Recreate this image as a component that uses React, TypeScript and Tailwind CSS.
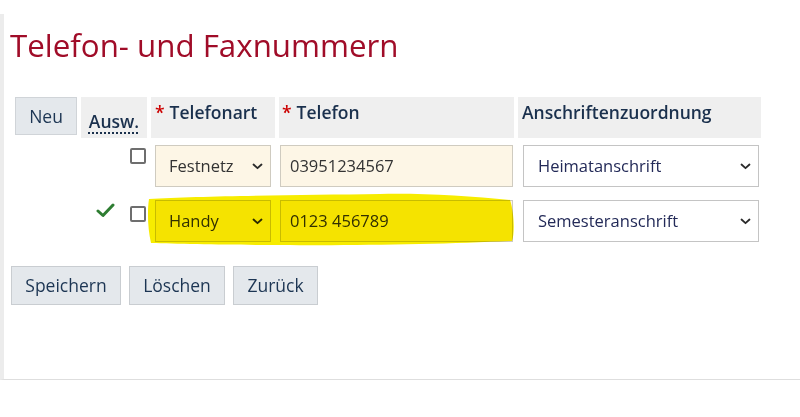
import React from "react";

const Chevron = ({ className = "" }: { className?: string }) => (
  <svg width="11" height="7" viewBox="0 0 11 7" className={className}>
    <path d="M1.5 1.5 L5.5 5.2 L9.5 1.5" fill="none" stroke="#2a2a2a" strokeWidth="1.8" strokeLinecap="round" strokeLinejoin="round" />
  </svg>
);

const Checkbox = () => (
  <div className="w-[16px] h-[16px] border-2 border-[#6e6e6e] rounded-[2px] bg-white" />
);

const cols = "grid grid-cols-[62px_66px_124px_235px_243px] gap-x-[4px]";

export default function App() {
  return (
    <div className="relative w-[800px] h-[417px] bg-white overflow-hidden" style={{ fontFamily: '"Open Sans", "Noto Sans", sans-serif' }}>
      <div className="pt-[14px]">
        <div className="h-[366px] border-l-[4px] border-l-[#ececec] border-b border-b-[#dedede] pl-[6px]">
          <h1 className="pt-[10px] text-[31.3px] leading-[42px] text-[#a00c28] font-normal">Telefon- und Faxnummern</h1>

          <div className="ml-[5px] mt-[31px]">
            {/* header */}
            <div className={`${cols} h-[41px]`}>
              <div className="h-[38px] bg-[#e4e8ec] border border-[#d0d4d8] flex items-center justify-center text-[17.5px] text-[#1c3553]">Neu</div>
              <div className="bg-[#efefef] flex items-end justify-center pb-[6px]">
                <span className="text-[17.5px] font-semibold text-[#1a304d] leading-[22px] underline decoration-dotted decoration-[1.5px] underline-offset-[4px]">Ausw.</span>
              </div>
              <div className="bg-[#efefef] pl-[4px] pt-[4px] text-[17.5px] font-semibold text-[#1a304d] leading-[22px]">
                <span className="text-[#c00] mr-[5px]">*</span>Telefonart
              </div>
              <div className="bg-[#efefef] pl-[3px] pt-[4px] text-[17.5px] font-semibold text-[#1a304d] leading-[22px]">
                <span className="text-[#c00] mr-[5px]">*</span>Telefon
              </div>
              <div className="bg-[#efefef] pl-[4px] pt-[4px] text-[17.5px] font-semibold text-[#1a304d] leading-[22px]">Anschriftenzuordnung</div>
            </div>

            {/* row 1 */}
            <div className={`${cols} mt-[7px] h-[42px]`}>
              <div />
              <div className="flex justify-end pt-[3px] pr-[1px]"><Checkbox /></div>
              <div className="pl-[4px]">
                <div className="w-[116px] h-[42px] bg-[#fdf6e6] border border-[#cfcbc0] flex items-center justify-between pl-[13px] pr-[7px] text-[16.5px] text-[#333]">
                  <span>Festnetz</span><Chevron />
                </div>
              </div>
              <div className="pl-[1px]">
                <div className="w-[233px] h-[42px] bg-[#fdf6e6] border border-[#cfcbc0] flex items-center pl-[9px] text-[16.5px] text-[#333]">03951234567</div>
              </div>
              <div className="pl-[5px]">
                <div className="w-[236px] h-[42px] bg-white border border-[#c4c4c4] flex items-center justify-between pl-[14px] pr-[7px] text-[16.5px] text-[#232a58]">
                  <span>Heimatanschrift</span><Chevron />
                </div>
              </div>
            </div>

            {/* row 2 */}
            <div className={`${cols} mt-[13px] h-[42px]`}>
              <div className="flex justify-end pt-[3px]">
                <svg width="19" height="15" viewBox="0 0 19 15" className="-mr-[38px]">
                  <path d="M2 8 L7 12.5 L17 2" fill="none" stroke="#2e7d32" strokeWidth="3" strokeLinecap="round" strokeLinejoin="round" />
                </svg>
              </div>
              <div className="flex justify-end pt-[6px] pr-[1px]"><Checkbox /></div>
              <div className="pl-[4px]">
                <div className="w-[116px] h-[42px] bg-[#fdf6e6] border border-[#cfcbc0] flex items-center justify-between pl-[13px] pr-[7px] text-[16.5px] text-[#333]">
                  <span>Handy</span><Chevron />
                </div>
              </div>
              <div className="pl-[1px]">
                <div className="w-[233px] h-[42px] bg-[#fdf6e6] border border-[#cfcbc0] flex items-center pl-[9px] text-[16.5px] text-[#333]">0123 456789</div>
              </div>
              <div className="pl-[5px]">
                <div className="w-[236px] h-[42px] bg-white border border-[#c4c4c4] flex items-center justify-between pl-[14px] pr-[7px] text-[16.5px] text-[#232a58]">
                  <span>Semesteranschrift</span><Chevron />
                </div>
              </div>
            </div>
          </div>

          {/* buttons */}
          <div className="flex gap-[8px] ml-[1px] mt-[24px]">
            <div className="w-[110px] h-[39px] bg-[#e4e8ec] border border-[#c9cdd1] flex items-center justify-center text-[17.5px] text-[#1c3553]">Speichern</div>
            <div className="w-[96px] h-[39px] bg-[#e4e8ec] border border-[#c9cdd1] flex items-center justify-center text-[17.5px] text-[#1c3553]">Löschen</div>
            <div className="w-[85px] h-[39px] bg-[#e4e8ec] border border-[#c9cdd1] flex items-center justify-center text-[17.5px] text-[#1c3553]">Zurück</div>
          </div>
        </div>
      </div>

      {/* highlighter marker overlay */}
      <svg className="absolute left-0 top-0 pointer-events-none mix-blend-multiply" width="800" height="417" viewBox="0 0 800 417">
        <path
          d="M149 199 C 200 196, 300 195, 380 194 C 420 193, 470 196, 510 200 C 514 212, 515 232, 512 241 C 450 244, 350 246, 280 245 C 230 245, 180 244, 151 243 C 148 230, 147 212, 149 199 Z"
          fill="#f7ec00"
        />
      </svg>
    </div>
  );
}
